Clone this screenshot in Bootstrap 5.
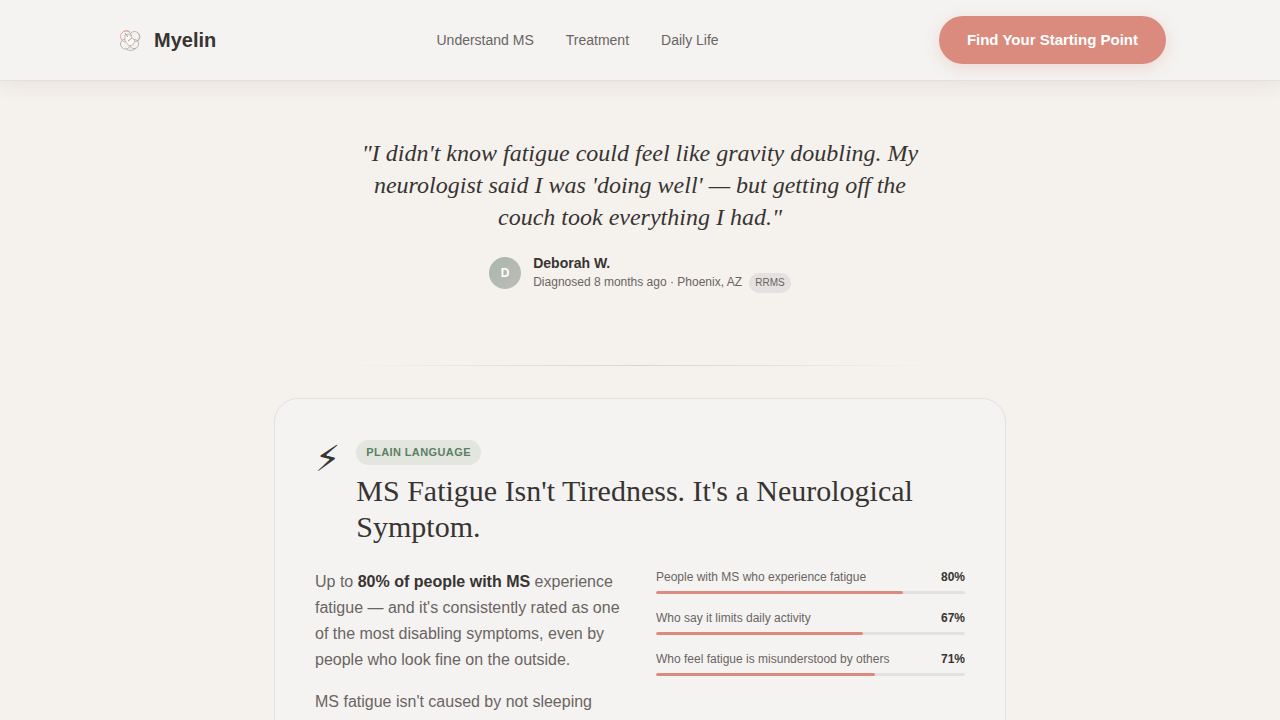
<!DOCTYPE html>
<html lang="en">
<head>
<meta charset="utf-8">
<meta name="viewport" content="width=device-width, initial-scale=1">
<title>Myelin</title>
<link rel="stylesheet" href="https://cdn.jsdelivr.net/npm/bootstrap@5.3.0/dist/css/bootstrap.min.css">
<style>
  :root { --ink: #373432; --muted: #6b6462; --coral: #da8b7e; --surface: #f4f3f1; --line: #e3e1df; }
  body { background: #f5f1ed; color: var(--ink); font-family: "Liberation Sans", Arial, sans-serif; }
  .site-header { background: var(--surface); border-bottom: 1px solid var(--line); box-shadow: 0 4px 20px rgba(60, 50, 40, .08); }
  .wrap { max-width: 1100px; }
  .brand-name { font-size: 20px; line-height: 30px; color: var(--ink); }
  .site-links { gap: 32px; }
  .site-link { font-size: 14px; line-height: 20px; color: var(--muted); }
  .cta { font-size: 15px; line-height: 24px; padding: 12px 28px; color: #fff; background: var(--coral); border: 0; box-shadow: 0 4px 16px rgba(218, 139, 126, .25); }
  .cta:hover { color: #fff; background: #cd7b6e; }
  .story { max-width: 600px; padding-top: 56px; padding-bottom: 72px; }
  .story-quote { font: italic 24px/32px "Liberation Serif", "Times New Roman", serif; }
  .avatar { width: 32px; height: 32px; font-size: 12px; color: #fff; background: linear-gradient(135deg, #a9b8ac, #bdbbb9); }
  .person { font-size: 14px; line-height: 20px; }
  .meta { font-size: 12px; line-height: 18px; color: var(--muted); }
  .kind { font-size: 10px; line-height: 16px; padding: 2px 6px; background: #e4e1e0; }
  .rule { max-width: 600px; height: 1px; background: linear-gradient(90deg, transparent, #d8d4d1, transparent); }
  .topic { max-width: 732px; margin-top: 32px; padding: 40px; background: var(--surface); border: 1px solid var(--line); border-radius: 24px; }
  .bolt { font: 36px/40px "DejaVu Sans", sans-serif; }
  .plain-tag { font-size: 11px; line-height: 17px; padding: 4px 10px; letter-spacing: .4px; color: #5b7f65; background: #e3e6df; }
  .topic-title { font: 30px/36px "Liberation Serif", "Times New Roman", serif; }
  .facts { --bs-gutter-x: 32px; }
  .copy { font-size: 16px; line-height: 26px; color: var(--muted); }
  .copy strong, .stat strong { color: var(--ink); }
  .stat { font-size: 12px; line-height: 16px; color: var(--muted); margin-bottom: 16px; }
  .stat .progress { height: 3px; margin-top: 6px; background: #e3e1df; border-radius: 2px; }
  .stat .progress-bar { background: var(--coral); border-radius: 2px; }
</style>
</head>
<body class="vh-100 overflow-hidden">
<header class="site-header position-relative">
  <nav class="wrap mx-auto px-4 py-3 d-flex align-items-center justify-content-between" aria-label="Main">
    <a href="#" class="d-flex align-items-center gap-2 text-decoration-none">
      <svg width="32" height="32" viewBox="0 0 32 32" fill="none" stroke-width=".9" aria-hidden="true">
        <g stroke="#b3adaa">
          <circle cx="20.500" cy="12.500" r="5"/><circle cx="20" cy="20" r="4.600"/>
          <circle cx="11.500" cy="20" r="5"/>
          <path d="M23 8c3 2 4 6 1 9M12 25c3 2 8 2 10-1"/>
        </g>
        <g stroke="#dfa096"><circle cx="12" cy="12.500" r="5.500"/><path d="M9 8c2-2 5-2 7 0"/></g>
        <path d="m11 11 4-1 6 7-2 4-4 1-4-5z" fill="#faf8f5" stroke="#c9b5a6"/>
        <path d="m14 17 4-3M11 9l3 4" stroke="#a19a96"/>
      </svg>
      <span class="brand-name fw-bold">Myelin</span>
    </a>
    <div class="site-links d-flex">
      <a href="#" class="site-link text-decoration-none">Understand MS</a>
      <a href="#" class="site-link text-decoration-none">Treatment</a>
      <a href="#" class="site-link text-decoration-none">Daily Life</a>
    </div>
    <button type="button" class="btn cta rounded-pill fw-bold">Find Your Starting Point</button>
  </nav>
</header>
<main class="px-4">
  <section class="story mx-auto text-center">
    <blockquote class="story-quote mb-0 px-3">"I didn't know fatigue could feel like gravity doubling. My neurologist said I was 'doing well' — but getting off the couch took everything I had."</blockquote>
    <div class="d-flex align-items-center justify-content-center mt-3 pt-1 text-start">
      <div class="avatar rounded-circle d-flex align-items-center justify-content-center fw-bold flex-shrink-0">D</div>
      <div class="ps-2 ms-1">
        <div class="person fw-bold">Deborah W.</div>
        <div class="meta">Diagnosed 8 months ago · Phoenix, AZ <span class="kind rounded-pill d-inline-block ms-1">RRMS</span></div>
      </div>
    </div>
  </section>
  <div class="rule mx-auto"></div>
  <article class="topic mx-auto">
    <div class="d-flex gap-3 mb-4">
      <div class="bolt" aria-hidden="true">⚡</div>
      <div>
        <span class="plain-tag rounded-pill d-inline-block fw-bold text-uppercase">Plain language</span>
        <h2 class="topic-title mb-0 mt-2">MS Fatigue Isn't Tiredness. It's a Neurological Symptom.</h2>
      </div>
    </div>
    <div class="row facts">
      <div class="col-6 copy">
        <p>Up to <strong>80% of people with MS</strong> experience fatigue — and it's consistently rated as one of the most disabling symptoms, even by people who look fine on the outside.</p>
        <p class="mb-0">MS fatigue isn't caused by not sleeping</p>
      </div>
      <div class="col-6">
        <div class="stat">
          <div class="d-flex justify-content-between"><span id="s1">People with MS who experience fatigue</span><strong>80%</strong></div>
          <div class="progress" role="progressbar" aria-labelledby="s1" aria-valuenow="80" aria-valuemin="0" aria-valuemax="100"><div class="progress-bar" style="width: 80%"></div></div>
        </div>
        <div class="stat">
          <div class="d-flex justify-content-between"><span id="s2">Who say it limits daily activity</span><strong>67%</strong></div>
          <div class="progress" role="progressbar" aria-labelledby="s2" aria-valuenow="67" aria-valuemin="0" aria-valuemax="100"><div class="progress-bar" style="width: 67%"></div></div>
        </div>
        <div class="stat">
          <div class="d-flex justify-content-between"><span id="s3">Who feel fatigue is misunderstood by others</span><strong>71%</strong></div>
          <div class="progress" role="progressbar" aria-labelledby="s3" aria-valuenow="71" aria-valuemin="0" aria-valuemax="100"><div class="progress-bar" style="width: 71%"></div></div>
        </div>
      </div>
    </div>
  </article>
</main>
<script src="https://cdn.jsdelivr.net/npm/bootstrap@5.3.0/dist/js/bootstrap.bundle.min.js"></script>
</body>
</html>
